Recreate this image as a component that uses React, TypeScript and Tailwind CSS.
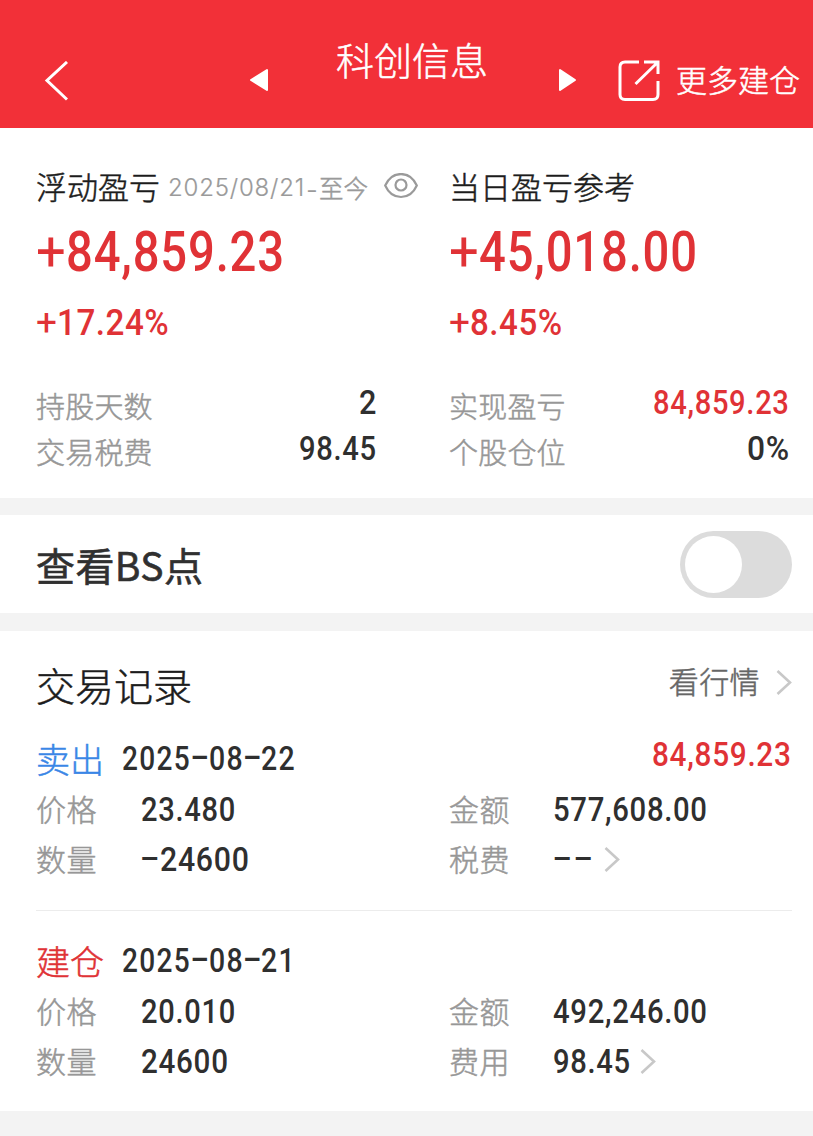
import { useLayoutEffect, useRef, useState } from "react";

const CJK = "font-['Noto_Sans_CJK_SC',sans-serif]";
const NUM = "font-['Roboto','Noto_Sans_CJK_SC',sans-serif]";
const BOOK = "font-light [-webkit-text-stroke:0.5px_currentColor]";

/* A figure set in a condensed face: squeezed horizontally to the width given. */
function Figure({ text, width, className = "font-medium" }: { text: string; width: number; className?: string }) {
  const ref = useRef<HTMLSpanElement>(null);
  const [scale, setScale] = useState(1);
  useLayoutEffect(() => {
    if (ref.current) setScale(width / ref.current.offsetWidth);
  }, [text, width]);
  return (
    <span className={`${NUM} block shrink-0 whitespace-nowrap ${className}`} style={{ width }}>
      <span ref={ref} className="inline-block origin-left" style={{ transform: `scaleX(${scale})` }}>
        {text}
      </span>
    </span>
  );
}

function Chevron({ className = "" }: { className?: string }) {
  return (
    <svg viewBox="0 0 16 25" className={`h-[25px] w-[16px] shrink-0 ${className}`} fill="none" stroke="#c8c8c8" strokeWidth="2.6">
      <path d="M1.500 1 L14 12.500 L1.500 24" />
    </svg>
  );
}

function StatRow({ label, value, width, red = false }: { label: string; value: string; width: number; red?: boolean }) {
  return (
    <div className="flex h-[46px] items-center justify-between">
      <span className={`${CJK} ${BOOK} text-[29px] leading-[46px] tracking-[0.2px] text-[#979797]`}>{label}</span>
      <Figure
        text={value}
        width={width}
        className={`pb-[5px] text-[34px] leading-[41px] font-medium tracking-[0.8px] ${red ? "text-[#e03236]" : "text-[#2f2f2f]"}`}
      />
    </div>
  );
}

function Profit({ amount, rate, rateWidth }: { amount: string; rate: string; rateWidth: number }) {
  return (
    <div className="text-[#e03236]">
      <div className="mt-[7px] flex text-[56px] leading-[74px]">
        <Figure text="+" width={30} className="font-normal" />
        <Figure text={amount} width={219} className="font-medium tracking-[1px]" />
      </div>
      <div className="mt-[11px] flex text-[37px] leading-[46px]">
        <Figure text="+" width={21} className="font-normal" />
        <Figure text={rate} width={rateWidth} className="font-medium tracking-[0.6px]" />
      </div>
    </div>
  );
}

function Dash({ className = "" }: { className?: string }) {
  return <span className={`inline-block -translate-y-[2px] scale-x-[1.7] text-center ${className}`}>-</span>;
}

function TradeDate({ parts }: { parts: string[] }) {
  return (
    <div className={`${NUM} ml-[18px] flex items-center text-[32.500px] leading-[50px] font-medium text-[#2f2f2f]`}>
      <Figure text={parts[0]} width={69} className="tracking-[1.5px]" />
      <Dash className="w-[18px]" />
      <Figure text={parts[1]} width={35} className="tracking-[1.5px]" />
      <Dash className="w-[17px]" />
      <Figure text={parts[2]} width={35} className="tracking-[1.5px]" />
    </div>
  );
}

function Label({ children }: { children: string }) {
  return <span className={`${CJK} ${BOOK} pb-px text-[30px] leading-[49px] tracking-[0.6px] text-[#979797]`}>{children}</span>;
}

const valueClass = "text-[34px] leading-[50px] font-medium tracking-[0.8px] text-[#2f2f2f]";

export default function App() {
  return (
    <div className={`${CJK} flex h-[1136px] w-[813px] flex-col overflow-hidden bg-white`}>
      <header className="flex h-32 shrink-0 items-start bg-[#f23038] text-white">
        <svg viewBox="0 0 24 40" className="mt-[61px] ml-[44px] h-[40px] w-[24px]" fill="none" stroke="white" strokeWidth="3">
          <path d="M23 1 L3 19.500 L23 38.500" />
        </svg>
        <svg viewBox="0 0 19 24" className="mt-[68px] ml-[181px] h-[24px] w-[19px]" fill="white" stroke="white" strokeWidth="2" strokeLinejoin="round">
          <path d="M2 12 L18 2 V22 Z" />
        </svg>
        <h1 className={`${BOOK} mt-[31px] ml-[68px] w-[154px] text-[38px] leading-[56px] whitespace-nowrap`}>科创信息</h1>
        <svg viewBox="0 0 19 24" className="mt-[68px] ml-[68px] h-[24px] w-[19px]" fill="white" stroke="white" strokeWidth="2" strokeLinejoin="round">
          <path d="M17 12 L2 2 V22 Z" />
        </svg>
        <svg viewBox="0 0 42 42" className="mt-[60px] ml-[41px] h-[42px] w-[42px]" fill="none" stroke="white" strokeWidth="3">
          <path d="M21 2 H7 Q2 2 2 7 V34.500 Q2 39.500 7 39.500 H35 Q40 39.500 40 34.500 V21" />
          <path d="M26 2 H40 V14 M40 2 L17.500 24" />
        </svg>
        <span className={`${BOOK} mt-[56px] ml-[16px] text-[31px] leading-[46px] whitespace-nowrap`}>更多建仓</span>
      </header>

      <section className="grid h-[370px] shrink-0 grid-cols-[413px_341px] pt-[36px] pl-[36px]">
        <div className="w-[341px]">
          <div className="flex h-[44px] items-center whitespace-nowrap">
            <span className={`text-[31px] leading-[44px] text-[#1c1c1c] ${BOOK}`}>浮动盈亏</span>
            <span className="ml-[8px] flex items-center pt-[3px] leading-[44px] text-[#9a9a9a]">
              <span className="w-[137px] font-['Inter'] text-[24px] font-light tracking-[0.8px] [-webkit-text-stroke:0.2px_currentColor]">2025/08/21</span>
              <span className="inline-block w-[14px] scale-x-[1.3] text-center text-[24px] font-normal">-</span>
              <span className={`text-[24.500px] ${BOOK}`}>至今</span>
            </span>
            <svg viewBox="0 0 34 26" className="ml-[16px] h-[26px] w-[34px] shrink-0" fill="none" stroke="#9a9a9a" strokeWidth="2.2">
              <path d="M1.200 12.500 C8 -2.800 26 -2.800 32.800 12.500 C26 27.800 8 27.800 1.200 12.500 Z" />
              <circle cx="17" cy="12" r="5.500" />
            </svg>
          </div>
          <Profit amount="84,859.23" rate="17.24%" rateWidth={112} />
          <div className="mt-[36px]">
            <StatRow label="持股天数" value="2" width={18} />
            <StatRow label="交易税费" value="98.45" width={78} />
          </div>
        </div>
        <div>
          <div className="flex h-[44px] items-center">
            <span className={`text-[31px] leading-[44px] text-[#1c1c1c] ${BOOK}`}>当日盈亏参考</span>
          </div>
          <Profit amount="45,018.00" rate="8.45%" rateWidth={93} />
          <div className="mt-[36px]">
            <StatRow label="实现盈亏" value="84,859.23" width={137} red />
            <StatRow label="个股仓位" value="0%" width={43} />
          </div>
        </div>
      </section>

      <section className="flex h-[133px] shrink-0 items-center justify-between border-y-[17px] border-b-[18px] border-[#f3f3f3] pr-[21px] pl-[36px]">
        <span className="text-[39px] leading-[60px] tracking-[0.4px] text-[#303030] [-webkit-text-stroke:0.6px_currentColor]">查看BS点</span>
        <button className="flex h-[67px] w-[112px] items-center rounded-full bg-[#dcdcdc] pl-[5px]" aria-label="查看BS点">
          <span className="h-[57px] w-[57px] rounded-full bg-white" />
        </button>
      </section>

      <section className="h-[480px] shrink-0 pr-[21px] pl-[36px]">
        <div className="flex h-[103px] items-center justify-between">
          <span className={`pt-[3px] text-[39px] leading-[60px] text-[#1c1c1c] ${BOOK}`}>交易记录</span>
          <span className="flex items-center">
            <span className={`pb-[6px] text-[30px] leading-[46px] tracking-[0.4px] text-[#666] ${BOOK}`}>看行情</span>
            <Chevron className="ml-[16px]" />
          </span>
        </div>

        <div className="h-[177px] border-b border-[#ececec]">
          <div className="flex h-[50px] items-center">
            <span className={`w-[68px] text-[34px] leading-[50px] text-[#3a86e6] ${BOOK}`}>卖出</span>
            <TradeDate parts={["2025", "08", "22"]} />
            <Figure text="84,859.23" width={140} className="ml-auto pb-[9px] text-[34px] leading-[41px] font-medium tracking-[0.8px] text-[#e03236]" />
          </div>
          <div className="grid h-[50px] grid-cols-[105px_308px_104px_1fr] items-center">
            <Label>价格</Label>
            <Figure text="23.480" width={95} className={valueClass} />
            <Label>金额</Label>
            <Figure text="577,608.00" width={155} className={valueClass} />
          </div>
          <div className="grid h-[50px] grid-cols-[105px_308px_104px_1fr] items-center">
            <Label>数量</Label>
            <span className={`${NUM} ${valueClass} flex`}>
              <Dash className="w-[19px]" />
              <Figure text="24600" width={90} className="font-medium" />
            </span>
            <Label>税费</Label>
            <span className={`${NUM} ${valueClass} flex items-center`}>
              <Dash className="w-[20px]" />
              <Dash className="w-[22px]" />
              <Chevron className="ml-[9px]" />
            </span>
          </div>
        </div>

        <div className="pt-[25px]">
          <div className="flex h-[50px] items-center">
            <span className={`w-[68px] text-[34px] leading-[50px] text-[#e03236] ${BOOK}`}>建仓</span>
            <TradeDate parts={["2025", "08", "21"]} />
          </div>
          <div className="grid h-[50px] grid-cols-[105px_308px_104px_1fr] items-center">
            <Label>价格</Label>
            <Figure text="20.010" width={95} className={valueClass} />
            <Label>金额</Label>
            <Figure text="492,246.00" width={155} className={valueClass} />
          </div>
          <div className="grid h-[50px] grid-cols-[105px_308px_104px_1fr] items-center">
            <Label>数量</Label>
            <Figure text="24600" width={88} className={valueClass} />
            <Label>费用</Label>
            <span className="flex items-center">
              <Figure text="98.45" width={78} className={valueClass} />
              <Chevron className="ml-[9px]" />
            </span>
          </div>
        </div>
      </section>
      <div className="flex-1 bg-[#f3f3f3]" />
    </div>
  );
}
